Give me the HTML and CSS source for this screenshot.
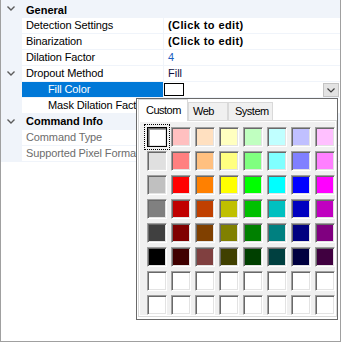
FILE: index.html
```html
<!DOCTYPE html>
<html>
<head>
<meta charset="utf-8">
<link rel="stylesheet" href="styles.css">
</head>
<body>
<div class="grid">
  <div class="row cat first">
    <span class="margin"><svg class="chev" width="8" height="5" viewBox="0 0 8 5"><path d="M0.5 0.5 L4 4 L7.5 0.5" /></svg></span>
    <span class="name">General</span>
  </div>
  <div class="row">
    <span class="margin"></span>
    <span class="name">Detection Settings</span>
    <span class="value bold">(Click to edit)</span>
  </div>
  <div class="row">
    <span class="margin"></span>
    <span class="name">Binarization</span>
    <span class="value bold">(Click to edit)</span>
  </div>
  <div class="row">
    <span class="margin"></span>
    <span class="name">Dilation Factor</span>
    <span class="value num">4</span>
  </div>
  <div class="row">
    <span class="margin"><svg class="chev" width="8" height="5" viewBox="0 0 8 5"><path d="M0.5 0.5 L4 4 L7.5 0.5" /></svg></span>
    <span class="name">Dropout Method</span>
    <span class="value">Fill</span>
  </div>
  <div class="row selected">
    <span class="margin"></span>
    <span class="name sub">Fill Color</span>
    <span class="value colorval">
      <span class="colorbox"></span>
      <span class="ddbtn"><svg width="8" height="5" viewBox="0 0 8 5"><path d="M0.5 0.5 L4 4 L7.5 0.5" /></svg></span>
    </span>
  </div>
  <div class="row">
    <span class="margin"></span>
    <span class="name sub">Mask Dilation Factor</span>
    <span class="value"></span>
  </div>
  <div class="row cat">
    <span class="margin"><svg class="chev" width="8" height="5" viewBox="0 0 8 5"><path d="M0.5 0.5 L4 4 L7.5 0.5" /></svg></span>
    <span class="name">Command Info</span>
  </div>
  <div class="row readonly">
    <span class="margin"></span>
    <span class="name">Command Type</span>
    <span class="value"></span>
  </div>
  <div class="row readonly">
    <span class="margin"></span>
    <span class="name">Supported Pixel Formats</span>
    <span class="value"></span>
  </div>

  <div class="popup">
    <div class="tabs">
      <span class="tab active t-custom">Custom</span>
      <span class="tab t-web">Web</span>
      <span class="tab t-system">System</span>
    </div>
    <div class="page">
      <div class="panel">
        <span class="sw picked" style="background:#ffffff"></span>
        <span class="sw" style="background:#ffc0c0"></span>
        <span class="sw" style="background:#ffe0c0"></span>
        <span class="sw" style="background:#ffffc0"></span>
        <span class="sw" style="background:#c0ffc0"></span>
        <span class="sw" style="background:#c0ffff"></span>
        <span class="sw" style="background:#c0c0ff"></span>
        <span class="sw" style="background:#ffc0ff"></span>

        <span class="sw" style="background:#e0e0e0"></span>
        <span class="sw" style="background:#ff8080"></span>
        <span class="sw" style="background:#ffc080"></span>
        <span class="sw" style="background:#ffff80"></span>
        <span class="sw" style="background:#80ff80"></span>
        <span class="sw" style="background:#80ffff"></span>
        <span class="sw" style="background:#8080ff"></span>
        <span class="sw" style="background:#ff80ff"></span>

        <span class="sw" style="background:#c0c0c0"></span>
        <span class="sw" style="background:#ff0000"></span>
        <span class="sw" style="background:#ff8000"></span>
        <span class="sw" style="background:#ffff00"></span>
        <span class="sw" style="background:#00ff00"></span>
        <span class="sw" style="background:#00ffff"></span>
        <span class="sw" style="background:#0000ff"></span>
        <span class="sw" style="background:#ff00ff"></span>

        <span class="sw" style="background:#808080"></span>
        <span class="sw" style="background:#c00000"></span>
        <span class="sw" style="background:#c04000"></span>
        <span class="sw" style="background:#c0c000"></span>
        <span class="sw" style="background:#00c000"></span>
        <span class="sw" style="background:#00c0c0"></span>
        <span class="sw" style="background:#0000c0"></span>
        <span class="sw" style="background:#c000c0"></span>

        <span class="sw" style="background:#404040"></span>
        <span class="sw" style="background:#800000"></span>
        <span class="sw" style="background:#804000"></span>
        <span class="sw" style="background:#808000"></span>
        <span class="sw" style="background:#008000"></span>
        <span class="sw" style="background:#008080"></span>
        <span class="sw" style="background:#000080"></span>
        <span class="sw" style="background:#800080"></span>

        <span class="sw" style="background:#000000"></span>
        <span class="sw" style="background:#400000"></span>
        <span class="sw" style="background:#804040"></span>
        <span class="sw" style="background:#404000"></span>
        <span class="sw" style="background:#004000"></span>
        <span class="sw" style="background:#004040"></span>
        <span class="sw" style="background:#000040"></span>
        <span class="sw" style="background:#400040"></span>

        <span class="sw"></span><span class="sw"></span><span class="sw"></span><span class="sw"></span>
        <span class="sw"></span><span class="sw"></span><span class="sw"></span><span class="sw"></span>
        <span class="sw"></span><span class="sw"></span><span class="sw"></span><span class="sw"></span>
        <span class="sw"></span><span class="sw"></span><span class="sw"></span><span class="sw"></span>
      </div>
    </div>
  </div>
</div>
</body>
</html>
```
FILE: styles.css
```css
html, body {
  margin: 0;
  padding: 0;
  background: #ffffff;
}

.grid {
  position: relative;
  width: 341px;
  height: 342px;
  box-sizing: border-box;
  border: 1px solid #a0a0a0;
  border-top: none;
  background: #ffffff;
  font-family: "Liberation Sans", Arial, sans-serif;
  font-size: 11px;
  color: #000000;
}

.row {
  display: flex;
  height: 16px;
  box-sizing: border-box;
  border-bottom: 1px solid #f0f4fa;
  line-height: 15px;
}

.row.first {
  height: 18px;
  padding-top: 3px;
  line-height: 14px;
}

.cat {
  background: #f0f4fa;
  font-weight: bold;
}

.margin {
  width: 21px;
  flex: none;
  background: #f0f4fa;
  display: flex;
  align-items: center;
}

.row.first .margin {
  margin-top: -3px;
}

.chev {
  margin-left: 6px;
  fill: none;
  stroke: #5c5c5c;
  stroke-width: 1.4;
}

.name {
  width: 141px;
  flex: none;
  box-sizing: border-box;
  padding-left: 4px;
  white-space: nowrap;
  overflow: hidden;
  letter-spacing: -0.12px;
}

.cat .name {
  width: auto;
  letter-spacing: 0;
}

.name.sub {
  padding-left: 26px;
}

.value {
  flex: 1;
  display: flex;
  align-items: center;
  border-left: 1px solid #f0f4fa;
  padding-left: 4px;
  white-space: nowrap;
  color: #101040;
}

.value.bold {
  font-weight: bold;
  letter-spacing: 0.4px;
  color: #000000;
}

.value.num {
  color: #1e5fc0;
}

.readonly .name {
  color: #6d6d6d;
}

.selected .name {
  background: #0078d7;
  color: #ffffff;
}

.colorval {
  padding-left: 0;
  align-items: flex-start;
}

.colorbox {
  width: 20px;
  height: 13px;
  box-sizing: border-box;
  margin-top: 1px;
  border: 1px solid #000000;
  background: #ffffff;
}

.ddbtn {
  margin-left: auto;
  margin-right: 1px;
  margin-top: 1px;
  width: 16px;
  height: 14px;
  box-sizing: border-box;
  border: 1px solid #c4c4c4;
  background: #e3e3e3;
  display: flex;
  align-items: center;
  justify-content: center;
}

.ddbtn svg {
  fill: none;
  stroke: #404040;
  stroke-width: 1.2;
}

/* dropdown colour editor */
.popup {
  position: absolute;
  left: 135px;
  top: 98px;
  width: 202px;
  height: 222px;
  box-sizing: border-box;
  border: 1px solid #6a6a6a;
  background: #ffffff;
  padding-left: 1px;
}

.tabs {
  display: flex;
  align-items: flex-end;
  height: 21px;
}

.tab {
  box-sizing: border-box;
  height: 18px;
  border: 1px solid #d9d9d9;
  border-bottom: none;
  background: #f0f0f0;
  line-height: 16px;
  letter-spacing: -0.5px;
  color: #000000;
}

.tab.active {
  position: relative;
  z-index: 1;
  height: 22px;
  margin-bottom: -1px;
  background: #ffffff;
  line-height: 20px;
}

.t-custom { width: 50px; padding-left: 7px; }
.t-web { width: 40px; padding-left: 4px; }
.t-system { width: 45px; padding-left: 6px; }

.page {
  width: 199px;
  height: 197px;
  box-sizing: border-box;
  border: 1px solid #d9d9d9;
  background: #ffffff;
  padding: 1px;
}

.panel {
  height: 193px;
  box-sizing: border-box;
  background: #f0f0f0;
  padding: 5px 0 0 7px;
  display: grid;
  grid-template-columns: repeat(8, 20px);
  grid-auto-rows: 20px;
  gap: 4px;
}

.sw {
  box-sizing: border-box;
  width: 20px;
  height: 20px;
  background: #ffffff;
  border: 1px solid;
  border-color: #a0a0a0 #ffffff #ffffff #a0a0a0;
  box-shadow: inset 1px 1px 0 #696969, inset -1px -1px 0 #e3e3e3;
}

.sw.picked {
  border-color: #000000;
  box-shadow: inset 1px 1px 0 #696969, inset 2px 2px 0 #a0a0a0, inset -1px -1px 0 #e3e3e3;
  outline: 1px dotted #000000;
  outline-offset: 2px;
}
```
